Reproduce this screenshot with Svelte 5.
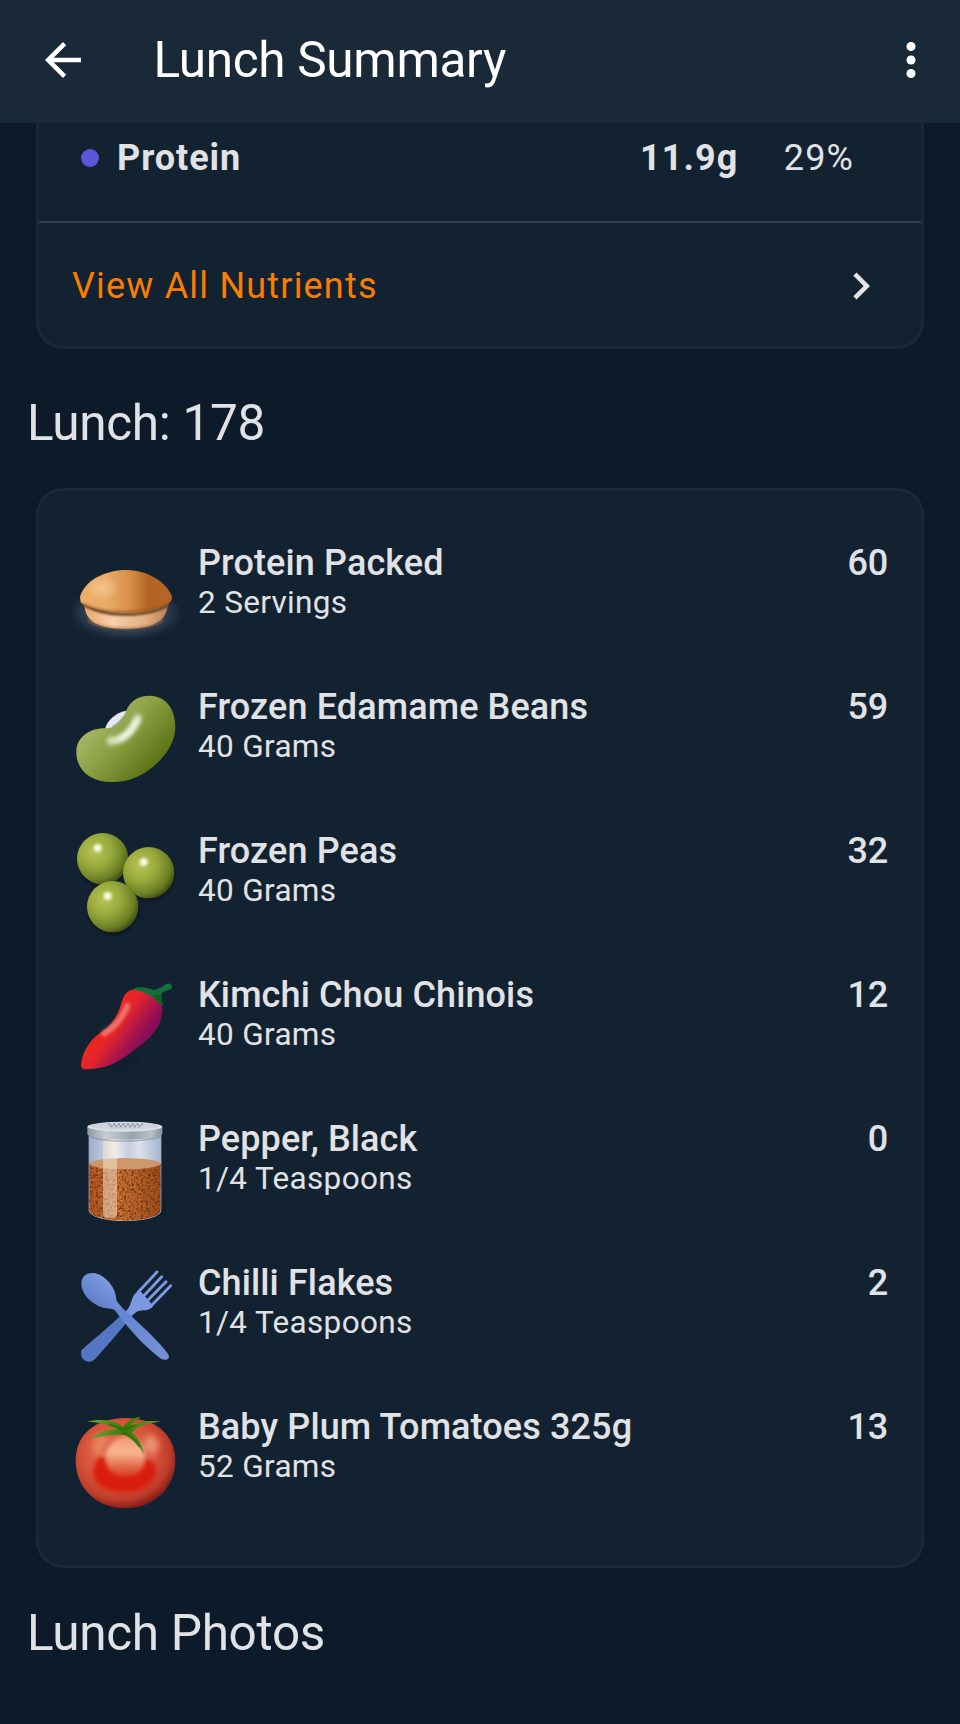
<script lang="ts">
  type Icon = 'bun' | 'bean' | 'peas' | 'chilli' | 'jar' | 'cutlery' | 'tomato'

  interface Food {
    icon: Icon
    name: string
    amount: string
    calories: number
  }

  const foods: Food[] = [
    { icon: 'bun', name: 'Protein Packed', amount: '2 Servings', calories: 60 },
    { icon: 'bean', name: 'Frozen Edamame Beans', amount: '40 Grams', calories: 59 },
    { icon: 'peas', name: 'Frozen Peas', amount: '40 Grams', calories: 32 },
    { icon: 'chilli', name: 'Kimchi Chou Chinois', amount: '40 Grams', calories: 12 },
    { icon: 'jar', name: 'Pepper, Black', amount: '1/4 Teaspoons', calories: 0 },
    { icon: 'cutlery', name: 'Chilli Flakes', amount: '1/4 Teaspoons', calories: 2 },
    { icon: 'tomato', name: 'Baby Plum Tomatoes 325g', amount: '52 Grams', calories: 13 }
  ]

  const total = foods.reduce((sum, f) => sum + f.calories, 0)

  const peas = [
    { x: 128, y: 116 },
    { x: 266, y: 158 },
    { x: 158, y: 260 }
  ]
</script>

{#snippet bun()}
  <svg class="food-icon" viewBox="36 -54 324 324">
    <defs>
      <radialGradient id="bun-glow">
        <stop offset="0.5" stop-color="#3c4a5f" />
        <stop offset="0.75" stop-color="#2d3b50" stop-opacity="0.75" />
        <stop offset="1" stop-color="#1c2a3c" stop-opacity="0" />
      </radialGradient>
      <linearGradient id="bun-top">
        <stop offset="0" stop-color="#efae68" />
        <stop offset="0.3" stop-color="#e9ab68" />
        <stop offset="0.55" stop-color="#d58d46" />
        <stop offset="0.75" stop-color="#b06424" />
        <stop offset="1" stop-color="#b56626" />
      </linearGradient>
      <linearGradient id="bun-base">
        <stop offset="0" stop-color="#e5a972" />
        <stop offset="0.35" stop-color="#f8cfa8" />
        <stop offset="0.75" stop-color="#e2ad82" />
        <stop offset="1" stop-color="#b98150" />
      </linearGradient>
      <radialGradient id="bun-shine">
        <stop offset="0" stop-color="#f8cf9c" stop-opacity="0.7" />
        <stop offset="1" stop-color="#f8cf9c" stop-opacity="0" />
      </radialGradient>
      <filter id="bun-blur" x="-10%" y="-50%" width="120%" height="200%">
        <feGaussianBlur stdDeviation="3" />
      </filter>
    </defs>
    <ellipse cx="198" cy="158" rx="182" ry="88" fill="url(#bun-glow)" />
    <path d="M73 132C75 174 96 206 195 206S321 176 323 132Z" fill="url(#bun-base)" />
    <path d="M84 178C104 199 150 204 195 204S290 197 310 178" fill="none" stroke="#b9773c" stroke-width="5" opacity="0.8" filter="url(#bun-blur)" />
    <path d="M72 134C110 156 150 164 197 163S290 157 324 134" fill="none" stroke="#60402a" stroke-width="9" filter="url(#bun-blur)" />
    <path d="M60 111C74 62 134 30 200 30C270 31 324 72 336 110C336 126 324 132 309 138C270 154 228 160 188 158C135 155 78 143 62 127Z" fill="url(#bun-top)" />
    <path d="M66 130C100 148 145 156 190 156S290 147 326 130" fill="none" stroke="#9a541d" stroke-width="6" opacity="0.8" filter="url(#bun-blur)" />
    <ellipse cx="128" cy="84" rx="52" ry="38" fill="url(#bun-shine)" />
  </svg>
{/snippet}

{#snippet bean()}
  <svg class="food-icon" viewBox="36 18 324 324">
    <defs>
      <linearGradient id="bean-skin" x1="0.1" y1="0.3" x2="0.8" y2="0.85">
        <stop offset="0" stop-color="#acbb6c" />
        <stop offset="0.45" stop-color="#8a9f42" />
        <stop offset="1" stop-color="#597010" />
      </linearGradient>
      <filter id="bean-blur" x="-50%" y="-50%" width="200%" height="200%">
        <feGaussianBlur stdDeviation="7" />
      </filter>
      <filter id="bean-soft"><feGaussianBlur stdDeviation="2" /></filter>
    </defs>
    <path d="M135 146C142 122 166 98 198 92L196 128L160 150Z" fill="#e6e6ec" filter="url(#bean-soft)" />
    <path d="M156 142C166 137 182 124 192 110" fill="none" stroke="#a5a5b0" stroke-width="6" filter="url(#bean-soft)" />
    <path
      d="M49 215C50 170 92 143 138 145C178 145 190 112 202 85C216 58 240 47 268 47C320 47 346 90 346 140C346 197 302 247 255 278C221 298 190 306 155 306C93 306 49 273 49 215Z"
      fill="url(#bean-skin)"
    />
    <path d="M152 183C192 182 216 155 234 114" fill="none" stroke="#e2e8cd" stroke-width="24" stroke-linecap="round" opacity="0.9" filter="url(#bean-blur)" />
    <path d="M178 176C204 166 216 150 230 122" fill="none" stroke="#fff" stroke-width="11" stroke-linecap="round" opacity="0.9" filter="url(#bean-blur)" />
  </svg>
{/snippet}

{#snippet peaTrio()}
  <svg class="food-icon" viewBox="36 30 324 324">
    <defs>
      <radialGradient id="pea-skin" cx="0.35" cy="0.35" r="0.72">
        <stop offset="0" stop-color="#bac556" />
        <stop offset="0.45" stop-color="#97a83b" />
        <stop offset="0.8" stop-color="#6b7d23" />
        <stop offset="1" stop-color="#3a4611" />
      </radialGradient>
      <radialGradient id="pea-shine">
        <stop offset="0" stop-color="#fff" />
        <stop offset="0.4" stop-color="#f2f5dc" stop-opacity="0.9" />
        <stop offset="1" stop-color="#d5dd92" stop-opacity="0" />
      </radialGradient>
      <filter id="pea-blur"><feGaussianBlur stdDeviation="4" /></filter>
    </defs>
    {#each peas as pea}
      <circle cx={pea.x + 2} cy={pea.y + 9} r="75" fill="#081019" opacity="0.6" filter="url(#pea-blur)" />
      <circle cx={pea.x} cy={pea.y} r="77" fill="url(#pea-skin)" />
      <circle cx={pea.x - 15} cy={pea.y - 32} r="19" fill="url(#pea-shine)" />
    {/each}
  </svg>
{/snippet}

{#snippet chilli()}
  <svg class="food-icon" viewBox="36 12 324 324">
    <defs>
      <linearGradient id="chilli-skin" x1="0.25" y1="0.35" x2="0.72" y2="0.68">
        <stop offset="0" stop-color="#f4291d" />
        <stop offset="0.4" stop-color="#e3242a" />
        <stop offset="0.75" stop-color="#ad164b" />
        <stop offset="1" stop-color="#8a0d59" />
      </linearGradient>
      <filter id="chilli-blur" x="-30%" y="-30%" width="160%" height="160%">
        <feGaussianBlur stdDeviation="5" />
      </filter>
    </defs>
    <path d="M130 297C180 290 215 262 243 240C246 270 222 300 150 302Z" fill="#0a1420" opacity="0.25" filter="url(#chilli-blur)" />
    <path
      d="M64 276C70 240 94 205 128 184C168 157 178 120 187 90C196 66 210 57 232 59C270 64 302 88 307 114C309 164 276 204 221 241C174 279 138 298 76 298C64 296 61 290 64 276Z"
      fill="url(#chilli-skin)"
    />
    <path d="M133 190C166 170 187 144 202 108" fill="none" stroke="#f4857a" stroke-width="18" stroke-linecap="round" opacity="0.8" filter="url(#chilli-blur)" />
    <path
      d="M216 58C236 48 260 51 282 61C296 56 308 52 316 43C328 36 340 43 334 58C322 62 311 63 304 71C303 84 308 94 308 107C290 98 283 80 262 72C244 64 230 61 216 58Z"
      fill="#12713a"
    />
    <path d="M278 75L302 74C303 86 308 95 308 107C294 99 289 85 278 75Z" fill="#115f1f" />
  </svg>
{/snippet}

{#snippet jar()}
  <svg class="food-icon" viewBox="36 24 324 324">
    <defs>
      <linearGradient id="jar-glass">
        <stop offset="0" stop-color="#9dadc8" />
        <stop offset="0.18" stop-color="#b9c5da" />
        <stop offset="0.35" stop-color="#eef0f5" />
        <stop offset="0.55" stop-color="#c6cddd" />
        <stop offset="0.7" stop-color="#dce0ea" />
        <stop offset="1" stop-color="#a4b5d0" />
      </linearGradient>
      <linearGradient id="jar-spice">
        <stop offset="0" stop-color="#ad5a20" />
        <stop offset="0.4" stop-color="#ca7832" />
        <stop offset="1" stop-color="#9c4e1e" />
      </linearGradient>
      <linearGradient id="jar-lid">
        <stop offset="0" stop-color="#8e9aa8" />
        <stop offset="0.25" stop-color="#c6ccd3" />
        <stop offset="0.6" stop-color="#9aa3ae" />
        <stop offset="0.85" stop-color="#b7bec6" />
        <stop offset="1" stop-color="#8793a0" />
      </linearGradient>
      <filter id="jar-speckle" x="0" y="0" width="100%" height="100%" color-interpolation-filters="sRGB">
        <feTurbulence type="fractalNoise" baseFrequency="0.14" numOctaves="2" seed="4" />
        <feColorMatrix values="0 0 0 0 0.46  0 0 0 0 0.18  0 0 0 0 0.07  3 0 0 0 -1.3" />
        <feComposite in2="SourceGraphic" operator="in" />
      </filter>
      <filter id="jar-blur" x="-30%" y="-30%" width="160%" height="160%">
        <feGaussianBlur stdDeviation="4" />
      </filter>
    </defs>
    <path d="M290 270C330 290 330 318 240 331Z" fill="#0a1420" opacity="0.5" filter="url(#jar-blur)" />
    <path d="M86 60V300C86 320 135 333 195 333S304 320 304 300V60Z" fill="url(#jar-glass)" />
    <path d="M88 160V300C88 318 135 332 195 332S302 318 302 300V160Z" fill="url(#jar-spice)" />
    <path d="M88 160V300C88 318 135 332 195 332S302 318 302 300V160Z" filter="url(#jar-speckle)" />
    <ellipse cx="195" cy="161" rx="107" ry="17" fill="#cd986b" />
    <rect x="129" y="72" width="42" height="251" rx="12" fill="#f7e5d4" opacity="0.5" />
    <path d="M88 74C120 96 270 96 302 74V82C260 100 130 100 88 82Z" fill="#68758a" opacity="0.45" />
    <path d="M82 50V72C90 94 298 94 307 72V50Z" fill="url(#jar-lid)" />
    <ellipse cx="194.500" cy="50" rx="112.500" ry="15" fill="#dce1e8" />
    <ellipse cx="194.500" cy="48" rx="103" ry="11" fill="#ccd3dc" />
    <path d="M145 43H249M151 49H243" fill="none" stroke="#8d98a5" stroke-width="5" stroke-dasharray="7 7" />
  </svg>
{/snippet}

{#snippet cutlery()}
  <svg class="food-icon" viewBox="36 6 324 324">
    <defs>
      <linearGradient id="cutlery-spoon" x1="0" y1="0.2" x2="0.8" y2="1">
        <stop offset="0" stop-color="#6284cf" />
        <stop offset="1" stop-color="#7391d8" />
      </linearGradient>
      <linearGradient id="cutlery-bowl" x1="0.2" y1="0.8" x2="0.7" y2="0.2">
        <stop offset="0" stop-color="#5c7dca" />
        <stop offset="1" stop-color="#7d9be0" />
      </linearGradient>
    </defs>
    <path d="M63 272C98 240 145 203 187 162L212 170C180 215 142 255 106 296C90 313 69 303 64 289Z" fill="#5576c3" />
    <path d="M184 164C215 148 211 121 222 105C230 95 236 92 240 92L280 137C274 147 263 151 250 151C229 152 220 162 207 178Z" fill="#7b99e1" />
    <path d="M235 96L291 36M249 110L305 50M262 122L318 65M275 136L332 77" fill="none" stroke="#7b99e1" stroke-width="8.500" stroke-linecap="round" />
    <path
      d="M160 144C195 194 248 256 304 297C319 303 330 296 326 285C303 248 227 180 174 132Z"
      fill="url(#cutlery-spoon)"
    />
    <path d="M65 80C60 52 77 38 100 39C134 43 165 79 168 112C169 130 180 132 186 144L168 154C158 144 145 146 130 143C99 134 70 109 65 80Z" fill="url(#cutlery-bowl)" />
  </svg>
{/snippet}

{#snippet tomato()}
  <svg class="food-icon" viewBox="36 18 324 324">
    <defs>
      <radialGradient id="tomato-skin" cx="0.44" cy="0.4" r="0.62">
        <stop offset="0" stop-color="#e57956" />
        <stop offset="0.6" stop-color="#d65238" />
        <stop offset="0.82" stop-color="#be3c29" />
        <stop offset="1" stop-color="#7c1a17" />
      </radialGradient>
      <linearGradient id="tomato-shine" x2="0" y2="1">
        <stop offset="0" stop-color="#f2966f" />
        <stop offset="0.4" stop-color="#f8b893" />
        <stop offset="0.75" stop-color="#e4694a" />
        <stop offset="1" stop-color="#d93a24" />
      </linearGradient>
      <linearGradient id="tomato-leaf">
        <stop offset="0" stop-color="#75a531" />
        <stop offset="0.5" stop-color="#387b0b" />
        <stop offset="1" stop-color="#6f992e" />
      </linearGradient>
      <filter id="tomato-blur" x="-60%" y="-60%" width="220%" height="220%">
        <feGaussianBlur stdDeviation="9" />
      </filter>
      <filter id="tomato-soft" x="-30%" y="-30%" width="160%" height="160%">
        <feGaussianBlur stdDeviation="6" />
      </filter>
    </defs>
    <path d="M47 182C47 100 108 56 196 54C285 54 346 103 346 183C346 260 284 325 197 325C109 325 47 263 47 182Z" fill="url(#tomato-skin)" />
    <ellipse cx="122" cy="137" rx="28" ry="36" fill="#ee8f67" opacity="0.7" filter="url(#tomato-blur)" />
    <ellipse cx="273" cy="135" rx="23" ry="30" fill="#f09a7a" opacity="0.85" filter="url(#tomato-blur)" />
    <path d="M118 172C83 212 96 276 190 276C282 276 302 216 280 176Z" fill="#d91a08" filter="url(#tomato-soft)" />
    <path d="M125 165C132 147 148 130 171 116M256 157C266 171 276 176 284 185" fill="none" stroke="#d9654f" stroke-width="12" filter="url(#tomato-soft)" />
    <path d="M136 172C141 134 168 110 198 108C231 109 257 142 256 178C254 209 232 230 195 230S135 207 136 172Z" fill="url(#tomato-shine)" filter="url(#tomato-soft)" />
    <path
      d="M82 65C112 57 158 57 190 81C201 65 220 51 244 51C231 58 216 68 211 79C232 65 270 58 304 66C264 68 235 77 215 97C234 112 247 134 252 162C239 139 221 118 195 105C163 103 128 107 92 117C112 96 147 89 173 87C148 74 116 67 82 65Z"
      fill="url(#tomato-leaf)"
    />
    <path d="M145 73C168 77 180 87 193 91C205 84 212 79 224 76M188 99C211 103 227 122 239 140" fill="none" stroke="#2f6c05" stroke-width="7" opacity="0.75" />
  </svg>
{/snippet}

<div class="screen">
  <header class="app-bar">
    <button class="icon-btn" aria-label="Back">
      <svg viewBox="0 0 24 24">
        <path d="M20 11H7.830l5.590-5.590L12 4l-8 8 8 8 1.410-1.410L7.830 13H20z" />
      </svg>
    </button>
    <h1>Lunch Summary</h1>
    <button class="icon-btn" aria-label="More options">
      <svg viewBox="0 0 24 24">
        <circle cx="12" cy="6" r="2" />
        <circle cx="12" cy="12" r="2" />
        <circle cx="12" cy="18" r="2" />
      </svg>
    </button>
  </header>

  <!-- Nutrients -->
  <section class="card nutrients">
    <div class="nutrient">
      <span class="dot"></span>
      <span class="nutrient-name">Protein</span>
      <span class="grams">11.9g</span>
      <span class="percent">29%</span>
    </div>
    <button class="view-all">
      <span>View All Nutrients</span>
      <svg class="chevron" viewBox="0 0 24 24">
        <path d="M10 6L8.590 7.410 13.170 12l-4.580 4.590L10 18l6-6z" />
      </svg>
    </button>
  </section>

  <!-- Foods -->
  <h2>Lunch: {total}</h2>
  <ul class="card foods">
    {#each foods as food}
      <li class="food">
        {#if food.icon === 'bun'}
          {@render bun()}
        {:else if food.icon === 'bean'}
          {@render bean()}
        {:else if food.icon === 'peas'}
          {@render peaTrio()}
        {:else if food.icon === 'chilli'}
          {@render chilli()}
        {:else if food.icon === 'jar'}
          {@render jar()}
        {:else if food.icon === 'cutlery'}
          {@render cutlery()}
        {:else}
          {@render tomato()}
        {/if}
        <div class="food-text">
          <div class="food-name">{food.name}</div>
          <div class="food-amount">{food.amount}</div>
        </div>
        <div class="calories">{food.calories}</div>
      </li>
    {/each}
  </ul>

  <h2 class="photos-title">Lunch Photos</h2>
</div>

<style>
  :global(body) {
    background: #0d1a29;
  }

  .screen {
    box-sizing: border-box;
    width: 960px;
    height: 1724px;
    overflow: hidden;
    background: #0d1a29;
    color: #e1e2e5;
    font-family: Roboto, 'Liberation Sans', sans-serif;
    font-size: 36px;
    line-height: 42px;
  }

  button {
    padding: 0;
    border: none;
    background: none;
    font: inherit;
    cursor: pointer;
  }

  .app-bar {
    display: flex;
    align-items: center;
    box-sizing: border-box;
    height: 123px;
    padding: 0 22.5px 3px 36px;
    background: #1a2938;
    color: #fff;
  }

  .icon-btn {
    width: 54px;
    height: 54px;
    color: #fff;
  }

  .icon-btn svg,
  .chevron {
    display: block;
    width: 54px;
    height: 54px;
    fill: currentColor;
  }

  h1,
  h2 {
    font-size: 49.5px;
    font-weight: 400;
    line-height: 58px;
    letter-spacing: -0.32px;
  }

  h1 {
    flex: 1;
    margin: 0 0 0 63.5px;
  }

  h2 {
    margin: 0;
    padding: 45px 27px 36px;
  }

  .photos-title {
    padding-top: 36px;
  }

  .card {
    box-sizing: border-box;
    margin: 0 36px;
    border: 3px solid #1a2937;
    border-radius: 27px;
    background: #132231;
  }

  .nutrients {
    border-top: none;
    border-top-left-radius: 0;
    border-top-right-radius: 0;
  }

  .nutrient {
    display: flex;
    align-items: center;
    height: 70px;
    padding: 0 67px 28px 42px;
    border-bottom: 2px solid #304050;
    letter-spacing: 1.125px;
  }

  .dot {
    width: 18px;
    height: 18px;
    margin-right: 18px;
    border-radius: 50%;
    background: #5b57d8;
  }

  .nutrient-name {
    flex: 1;
    font-weight: 700;
    letter-spacing: 0.95px;
  }

  .grams {
    font-weight: 700;
  }

  .percent {
    width: 115.5px;
    text-align: right;
  }

  .view-all {
    display: flex;
    align-items: center;
    justify-content: space-between;
    box-sizing: border-box;
    width: 100%;
    height: 123px;
    padding: 3px 33px 0;
    color: #f87d00;
    letter-spacing: 1.19px;
  }

  .chevron {
    color: #e6e6e6;
  }

  .foods {
    padding: 33px;
    list-style: none;
  }

  .food {
    display: flex;
    align-items: flex-start;
    box-sizing: border-box;
    height: 144px;
    padding: 18px 0;
  }

  .food-icon {
    flex: none;
    width: 108px;
    height: 108px;
    margin-right: 18px;
  }

  .food-text {
    flex: 1;
  }

  .food-name {
    font-weight: 500;
    letter-spacing: 0.11px;
  }

  .calories {
    font-weight: 500;
    letter-spacing: -0.2px;
  }

  .food-amount {
    font-size: 31.5px;
    line-height: 37px;
    letter-spacing: 0.33px;
  }
</style>
